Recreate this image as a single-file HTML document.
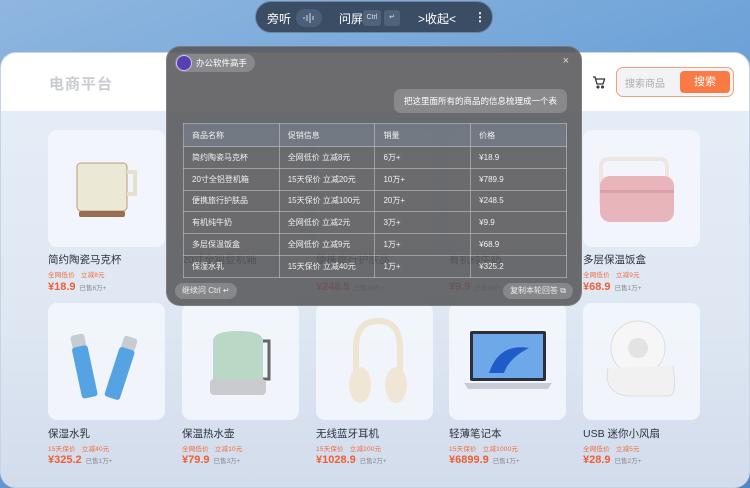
<!DOCTYPE html>
<html><head><meta charset="utf-8">
<style>
*{margin:0;padding:0;box-sizing:border-box}
body{width:750px;height:488px;overflow:hidden;position:relative;font-family:"Liberation Sans","Noto Sans CJK SC",sans-serif;background:linear-gradient(160deg,#8fb6e0 0%,#6ea3d8 40%,#4f86c8 100%)}
.panel{position:absolute;left:0;top:52px;width:750px;height:436px;border-radius:16px;background:linear-gradient(180deg,#e6eef8 0%,#dfe7f3 60%,#d3dcec 100%);overflow:hidden;border:1px solid #c8d4e6}
.hdr{position:absolute;left:0;top:0;width:750px;height:58px;background:#fff}
.logo{position:absolute;left:48px;top:20px;font-size:15px;font-weight:bold;color:#c9ccd2;letter-spacing:1px}
.search{position:absolute;left:615px;top:14px;width:118px;height:30px;border:1.5px solid #f0a07e;border-radius:7px;background:#f3f3f5}
.search span{position:absolute;left:8px;top:7px;font-size:10px;color:#a9acb3}
.search b{position:absolute;right:3px;top:3px;width:50px;height:22px;background:#fa7a45;color:#fff;font-size:11px;font-weight:normal;text-align:center;line-height:22px;border-radius:4px}
.cart{position:absolute;left:591px;top:22px}
.card{position:absolute;width:117px;height:117px;border-radius:9px;background:rgba(244,248,253,0.85)}
.t{position:absolute;font-size:10.5px;color:#2b3240;white-space:nowrap}
.p{position:absolute;font-size:6.5px;color:#f06a3c;white-space:nowrap;letter-spacing:0.2px}
.pr{position:absolute;font-size:11px;font-weight:bold;color:#ef5f33;white-space:nowrap}
.pr small{font-size:6.5px;font-weight:normal;color:#888;margin-left:4px}
.toolbar{position:absolute;left:255px;top:1px;width:238px;height:32px;border-radius:16px;background:#3b4d64;border:1px solid #6f86a2;color:#fff;font-size:12px}
.toolbar span{position:absolute;top:8px}
.key{position:absolute;top:8px;height:16px;border-radius:3px;background:#50627a;font-size:7px;color:#d7dfe8;text-align:center;line-height:16px}
.ov{position:absolute;left:166px;top:46px;width:416px;height:260px;border-radius:14px;background:rgba(88,88,90,0.88);border:1px solid rgba(140,140,140,0.6)}
.chip{position:absolute;left:8px;top:7px;height:18px;padding:0 8px 0 21px;border-radius:9px;background:rgba(255,255,255,0.2);color:#fff;font-size:8.5px;line-height:18px}
.av{position:absolute;left:1px;top:1px;width:16px;height:16px;border-radius:50%;background:#5a3fb0;border:1px solid #c8c0ff}
.q{position:absolute;right:14px;top:42px;height:24px;padding:0 10px;border-radius:7px;background:rgba(255,255,255,0.2);color:#fff;font-size:8.5px;line-height:24px}
table{position:absolute;left:16px;top:76px;width:384px;border-collapse:collapse;font-size:8px;color:#f2f2f2}
td{border:1px solid rgba(200,200,205,0.55);height:21.8px;padding-left:8px;width:96px}
tr.h td{background:rgba(120,130,145,0.6);height:23px}
.btn{position:absolute;height:16px;border-radius:8px;background:rgba(255,255,255,0.2);color:#eee;font-size:8px;line-height:16px;padding:0 7px}
</style></head><body>
<div class="panel">
 <div class="hdr">
  <div class="logo">电商平台</div>
  <svg class="cart" width="14" height="14" viewBox="0 0 14 14" fill="none" stroke="#333" stroke-width="1.3"><path d="M1 2h2l2 7h6l1.5-5H4"/><circle cx="6" cy="12" r="0.9"/><circle cx="10.5" cy="12" r="0.9"/></svg>
  <div class="search"><span>搜索商品</span><b>搜索</b></div>
 </div>
</div>
<div class="card" style="left:48px;top:130px"><svg width="117" height="117"><rect x="29" y="33" width="50" height="48" rx="4" fill="#ece8d6" stroke="#b79c7f" stroke-width="1"/><rect x="31" y="81" width="46" height="6" rx="2" fill="#9a6d52"/><path d="M79 42h8v22h-8" fill="none" stroke="#e6e1cd" stroke-width="4"/></svg></div>
<div class="card" style="left:182px;top:130px"></div>
<div class="card" style="left:316px;top:130px"></div>
<div class="card" style="left:449px;top:130px"></div>
<div class="card" style="left:583px;top:130px"><svg width="117" height="117"><path d="M18 74V37q0-8 8-8h50q8 0 8 8v40" fill="none" stroke="#eee6e2" stroke-width="4"/><rect x="17" y="46" width="74" height="46" rx="10" fill="#e8b5bc"/><rect x="17" y="60" width="74" height="3" fill="#d9a0a8"/></svg></div>
<div class="t" style="left:48px;top:252px">简约陶瓷马克杯</div><div class="p" style="left:48px;top:269px">全网低价&nbsp;&nbsp;&nbsp;立减8元</div><div class="pr" style="left:48px;top:281px">¥18.9<small>已售6万+</small></div>
<div class="t" style="left:182px;top:252px">20寸全铝登机箱</div>
<div class="t" style="left:316px;top:252px">便携旅行护肤品</div><div class="pr" style="left:316px;top:281px">¥248.5<small>已售20万+</small></div>
<div class="t" style="left:449px;top:252px">有机纯牛奶</div><div class="pr" style="left:449px;top:281px">¥9.9<small>已售3万+</small></div>
<div class="t" style="left:583px;top:252px">多层保温饭盒</div><div class="p" style="left:583px;top:269px">全网低价&nbsp;&nbsp;&nbsp;立减9元</div><div class="pr" style="left:583px;top:281px">¥68.9<small>已售1万+</small></div>
<div class="card" style="left:48px;top:303px"><svg width="117" height="117"><g transform="rotate(-12 40 60)"><rect x="28" y="30" width="14" height="14" rx="3" fill="#c7ccd2"/><rect x="27" y="42" width="16" height="52" rx="3" fill="#55a3e2"/></g><g transform="rotate(18 75 60)"><rect x="68" y="33" width="14" height="14" rx="3" fill="#c7ccd2"/><rect x="67" y="45" width="16" height="52" rx="3" fill="#55a3e2"/></g></svg></div>
<div class="card" style="left:182px;top:303px"><svg width="117" height="117"><path d="M31 38q0-10 25-10t25 10v47H31z" fill="#b9d8c6"/><path d="M81 38h6v38h-6" fill="none" stroke="#666" stroke-width="3"/><rect x="28" y="76" width="56" height="16" rx="4" fill="#c9cbce"/></svg></div>
<div class="card" style="left:316px;top:303px"><svg width="117" height="117"><path d="M40 70V45q0-27 22-27t22 27v25" fill="none" stroke="#ede4d2" stroke-width="6"/><ellipse cx="44" cy="82" rx="11" ry="18" fill="#efe6d6"/><ellipse cx="80" cy="82" rx="11" ry="18" fill="#efe6d6"/></svg></div>
<div class="card" style="left:449px;top:303px"><svg width="117" height="117"><rect x="21" y="28" width="76" height="50" rx="2" fill="#2a2f39"/><rect x="24" y="31" width="70" height="44" fill="#6fa8e8"/><path d="M40 70q10-30 40-25q-20 10-25 25z" fill="#1f5cc8"/><path d="M15 80h88l-4 6H19z" fill="#c9cbd8"/></svg></div>
<div class="card" style="left:583px;top:303px"><svg width="117" height="117"><circle cx="55" cy="45" r="27" fill="#f6f6f6" stroke="#ddd"/><circle cx="55" cy="45" r="10" fill="#e3e3e3"/><path d="M25 65q-5 25 20 28h40q10 0 5-30" fill="#f1f1f1" stroke="#ddd"/></svg></div>
<div class="t" style="left:48px;top:426px">保湿水乳</div><div class="p" style="left:48px;top:443px">15天保价&nbsp;&nbsp;&nbsp;立减40元</div><div class="pr" style="left:48px;top:454px">¥325.2<small>已售1万+</small></div>
<div class="t" style="left:182px;top:426px">保温热水壶</div><div class="p" style="left:182px;top:443px">全网低价&nbsp;&nbsp;&nbsp;立减10元</div><div class="pr" style="left:182px;top:454px">¥79.9<small>已售3万+</small></div>
<div class="t" style="left:316px;top:426px">无线蓝牙耳机</div><div class="p" style="left:316px;top:443px">15天保价&nbsp;&nbsp;&nbsp;立减200元</div><div class="pr" style="left:316px;top:454px">¥1028.9<small>已售2万+</small></div>
<div class="t" style="left:449px;top:426px">轻薄笔记本</div><div class="p" style="left:449px;top:443px">15天保价&nbsp;&nbsp;&nbsp;立减1000元</div><div class="pr" style="left:449px;top:454px">¥6899.9<small>已售1万+</small></div>
<div class="t" style="left:583px;top:426px">USB 迷你小风扇</div><div class="p" style="left:583px;top:443px">全网低价&nbsp;&nbsp;&nbsp;立减5元</div><div class="pr" style="left:583px;top:454px">¥28.9<small>已售2万+</small></div>

<div class="toolbar">
 <span style="left:11px">旁听</span>
 <div style="position:absolute;left:40px;top:7px;width:26px;height:18px;border-radius:9px;background:#4c5f78"></div>
 <svg style="position:absolute;left:46px;top:10px" width="14" height="12" stroke="#cfd8e4" stroke-width="1"><path d="M2 5v2M5 3v6M8 1v10M11 4v4"/></svg>
 <span style="left:83px">问屏</span>
 <div class="key" style="left:107px;width:18px">Ctrl</div>
 <div class="key" style="left:128px;width:16px">↵</div>
 <span style="left:162px">&gt;收起&lt;</span>
 <span style="left:218px;font-weight:bold">⋮</span>
</div>

<div class="ov">
 <div class="chip"><div class="av"></div>办公软件高手</div>
 <div style="position:absolute;right:12px;top:8px;color:#ddd;font-size:11px">×</div>
 <div class="q">把这里面所有的商品的信息梳理成一个表</div>
 <table>
  <tr class="h"><td>商品名称</td><td>促销信息</td><td>销量</td><td>价格</td></tr>
  <tr><td>简约陶瓷马克杯</td><td>全网低价 立减8元</td><td>6万+</td><td>¥18.9</td></tr>
  <tr><td>20寸全铝登机箱</td><td>15天保价 立减20元</td><td>10万+</td><td>¥789.9</td></tr>
  <tr><td>便携旅行护肤品</td><td>15天保价 立减100元</td><td>20万+</td><td>¥248.5</td></tr>
  <tr><td>有机纯牛奶</td><td>全网低价 立减2元</td><td>3万+</td><td>¥9.9</td></tr>
  <tr><td>多层保温饭盒</td><td>全网低价 立减9元</td><td>1万+</td><td>¥68.9</td></tr>
  <tr><td>保湿水乳</td><td>15天保价 立减40元</td><td>1万+</td><td>¥325.2</td></tr>
 </table>
 <div class="btn" style="left:8px;top:236px">继续问 Ctrl ↵</div>
 <div class="btn" style="right:8px;top:236px">复制本轮回答 ⧉</div>
</div>
</body></html>
